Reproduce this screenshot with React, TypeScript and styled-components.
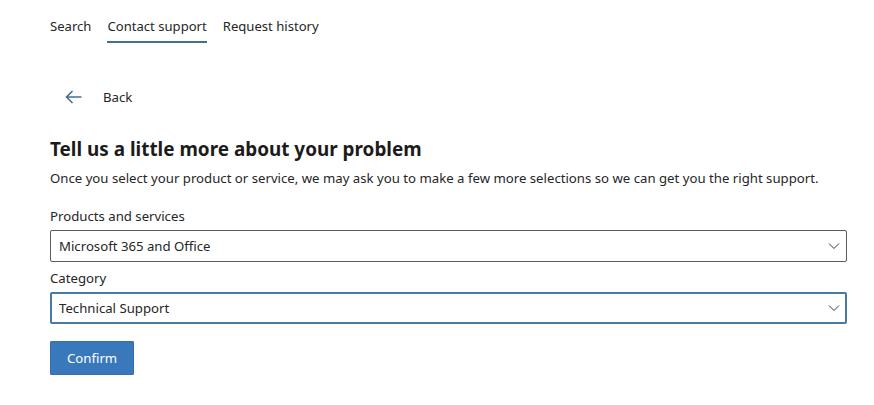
import styled, { createGlobalStyle } from "styled-components";

const GlobalStyle = createGlobalStyle`
  body {
    margin: 0;
    background: #ffffff;
    font-family: "Noto Sans", "Open Sans", sans-serif;
    color: #262626;
  }
`;

const Page = styled.div`
  padding: 0 27px 0 50px;
`;

const Tabs = styled.nav`
  display: flex;
  gap: 16px;
  padding-top: 16px;
`;

const Tab = styled.a<{ $active?: boolean }>`
  font-size: 13.1px;
  line-height: 20px;
  color: #262626;
  padding-bottom: 5px;
  border-bottom: 2px solid ${(p) => (p.$active ? "#44708f" : "transparent")};
  cursor: pointer;
`;

const BackLink = styled.button`
  display: flex;
  align-items: center;
  gap: 21px;
  margin-top: 44px;
  margin-left: 15px;
  padding: 0;
  border: none;
  background: none;
  font-family: inherit;
  font-size: 13.2px;
  line-height: 20px;
  color: #262626;
  cursor: pointer;
`;

const Heading = styled.h1`
  margin: 28px 0 0;
  font-size: 18.9px;
  line-height: 28px;
  font-weight: 700;
  color: #1b1b1b;
`;

const Description = styled.p`
  margin: 5px 0 0;
  font-size: 13.2px;
  line-height: 20px;
`;

const Label = styled.div`
  font-size: 13.2px;
  line-height: 20px;
  margin-top: 6px;
`;

const FirstLabel = styled(Label)`
  margin-top: 18px;
`;

const Select = styled.div<{ $focused?: boolean }>`
  display: flex;
  align-items: center;
  justify-content: space-between;
  box-sizing: border-box;
  margin-top: 4px;
  height: 32px;
  padding: ${(p) => (p.$focused ? "0 5px 0 7px" : "0 6px 0 8px")};
  border: ${(p) => (p.$focused ? "2px solid #4879a2" : "1px solid #5c5c5c")};
  border-radius: 2px;
  font-size: 13.2px;
`;

const Confirm = styled.button`
  margin-top: 17px;
  height: 34px;
  padding: 0 16px;
  border: 1px solid #3470ad;
  background: #3979bb;
  color: #ffffff;
  font-family: inherit;
  font-size: 13.2px;
  border-radius: 1px;
  cursor: pointer;
`;

const Chevron = () => (
  <svg width="12" height="8" viewBox="0 0 12 8" fill="none">
    <path d="M1 1.5 6 6.5 11 1.5" stroke="#3a3a3a" strokeWidth="1" />
  </svg>
);

const BackArrow = () => (
  <svg width="17" height="14" viewBox="0 0 17 14" fill="none">
    <path d="M16.5 7H1.5M7.5 1 1.5 7l6 6" stroke="#44708f" strokeWidth="1.6" />
  </svg>
);

function App() {
  return (
    <Page>
      <GlobalStyle />
      <Tabs>
        <Tab>Search</Tab>
        <Tab $active>Contact support</Tab>
        <Tab>Request history</Tab>
      </Tabs>
      <BackLink>
        <BackArrow />
        Back
      </BackLink>
      <Heading>Tell us a little more about your problem</Heading>
      <Description>
        Once you select your product or service, we may ask you to make a few more selections so we can get you the right support.
      </Description>
      <FirstLabel>Products and services</FirstLabel>
      <Select>
        Microsoft 365 and Office
        <Chevron />
      </Select>
      <Label>Category</Label>
      <Select $focused>
        Technical Support
        <Chevron />
      </Select>
      <Confirm>Confirm</Confirm>
    </Page>
  );
}

export default App;
